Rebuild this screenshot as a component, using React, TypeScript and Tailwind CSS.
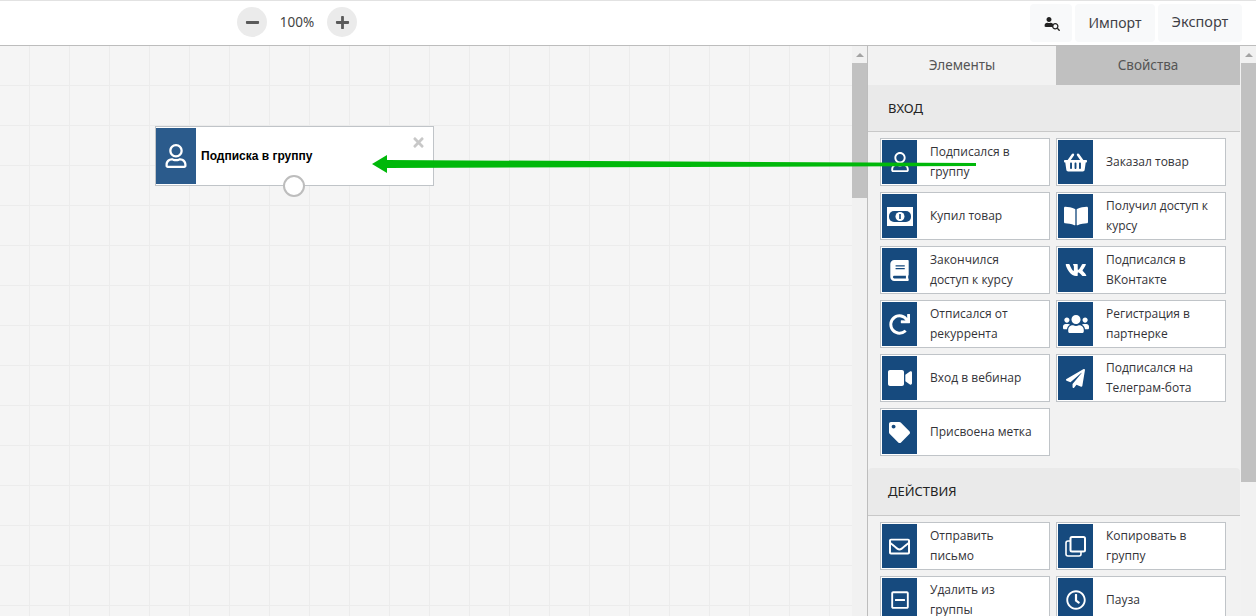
import type { ComponentType } from 'react';
import {
  FaBook,
  FaBookOpen,
  FaMinus,
  FaPaperPlane,
  FaPlus,
  FaRedo,
  FaRegClock,
  FaRegEnvelope,
  FaRegMinusSquare,
  FaRegUser,
  FaSearch,
  FaShoppingBasket,
  FaTag,
  FaTimes,
  FaUser,
  FaUsers,
  FaVideo,
  FaVk,
} from 'react-icons/fa';

type IconProps = { className?: string };
type Item = { label: string; icon: ComponentType<IconProps>; size: string };

function MoneyIcon({ className }: IconProps) {
  return (
    <svg className={className} viewBox="0 0 26 19">
      <rect width="26" height="19" y="0" fill="#fff" />
      <rect x="2" y="4" width="22" height="11" rx="5" fill="#164a7e" />
      <circle cx="13" cy="9.5" r="4.5" fill="#fff" />
      <rect x="12.2" y="7" width="1.6" height="5" fill="#164a7e" />
    </svg>
  );
}

function CopyIcon({ className }: IconProps) {
  return (
    <svg className={className} viewBox="0 0 21 21" fill="none" stroke="#fff">
      <rect x="5.5" y="1" width="14.5" height="14.5" rx="1.5" strokeWidth="2" />
      <path d="M5 5H3a2 2 0 0 0-2 2v11a2 2 0 0 0 2 2h11a2 2 0 0 0 2-2v-2" strokeWidth="1.6" />
    </svg>
  );
}

const ENTRY: Item[] = [
  { label: 'Подписался в группу', icon: FaRegUser, size: 'w-[20px] h-[20px]' },
  { label: 'Заказал товар', icon: FaShoppingBasket, size: 'w-[23px] h-[23px]' },
  { label: 'Купил товар', icon: MoneyIcon, size: 'w-[26px] h-[19px]' },
  { label: 'Получил доступ к курсу', icon: FaBookOpen, size: 'w-[24px] h-[24px]' },
  { label: 'Закончился доступ к курсу', icon: FaBook, size: 'w-[21px] h-[21px]' },
  { label: 'Подписался в ВКонтакте', icon: FaVk, size: 'w-[22px] h-[22px]' },
  { label: 'Отписался от рекуррента', icon: FaRedo, size: 'w-[21px] h-[21px]' },
  { label: 'Регистрация в партнерке', icon: FaUsers, size: 'w-[26px] h-[26px]' },
  { label: 'Вход в вебинар', icon: FaVideo, size: 'w-[24px] h-[24px]' },
  { label: 'Подписался на Телеграм-бота', icon: FaPaperPlane, size: 'w-[19px] h-[19px]' },
  { label: 'Присвоена метка', icon: FaTag, size: 'w-[21px] h-[21px]' },
];

const ACTIONS: Item[] = [
  { label: 'Отправить письмо', icon: FaRegEnvelope, size: 'w-[21px] h-[21px]' },
  { label: 'Копировать в группу', icon: CopyIcon, size: 'w-[21px] h-[21px]' },
  { label: 'Удалить из группы', icon: FaRegMinusSquare, size: 'w-[20px] h-[20px]' },
  { label: 'Пауза', icon: FaRegClock, size: 'w-[20px] h-[20px]' },
];

function Scrollbar({ thumb }: { thumb: string }) {
  return (
    <div className="w-[15px] shrink-0 bg-[#f1f1f1] flex flex-col items-center overflow-hidden">
      <div className="h-[17px] shrink-0 flex items-center justify-center">
        <div className="w-0 h-0 border-x-[4px] border-x-transparent border-b-[4px] border-b-[#a3a3a3]" />
      </div>
      <div className={`w-full bg-[#c1c1c1] shrink-0 ${thumb}`} />
    </div>
  );
}

function Card({ item }: { item: Item }) {
  const Icon = item.icon;
  return (
    <div className="h-12 border border-[#c0c4c8] bg-white p-px flex items-center">
      <div className="w-[35px] h-[44px] shrink-0 bg-[#164a7e] flex items-center justify-center text-white">
        <Icon className={item.size} />
      </div>
      <div className="pl-[13px] pr-[13px] text-[12px] leading-5 text-[#333338] font-['Open_Sans',sans-serif]">
        {item.label}
      </div>
    </div>
  );
}

function Section({ title, items, first }: { title: string; items: Item[]; first?: boolean }) {
  return (
    <div>
      <div
        className={
          first
            ? 'h-[47px] bg-[#eaeaea] border-b border-[#c8c8c8] pl-[20px] pt-[2px] flex items-center text-[13px] text-[#222]'
            : 'h-[48px] bg-[#eaeaea] border-b border-[#c8c8c8] rounded-t pl-[20px] flex items-center text-[13px] text-[#222]'
        }
      >
        {title}
      </div>
      <div className="grid grid-cols-[170px_170px] gap-x-[6px] gap-y-[6px] pl-[12px] pt-[6px] pb-3">
        {items.map((item) => (
          <Card key={item.label} item={item} />
        ))}
      </div>
    </div>
  );
}

export default function App() {
  return (
    <div className="w-[1256px] h-[616px] overflow-hidden bg-white flex flex-col relative font-['Noto_Sans',sans-serif]">
      {/* Top bar */}
      <div className="h-[46px] shrink-0 border-t border-b border-t-[#e2e2e2] border-b-[#bdbdbd] flex items-center pl-[237px] pr-[14px]">
        <button className="w-[30px] h-[30px] mb-[2px] rounded-full bg-[#ebebeb] flex items-center justify-center text-[#5a5a5a]">
          <FaMinus className="w-[15px] h-[15px]" />
        </button>
        <span className="w-[60px] mb-[2px] text-center text-[13.5px] text-[#444]">100%</span>
        <button className="w-[30px] h-[30px] mb-[2px] rounded-full bg-[#ebebeb] flex items-center justify-center text-[#5a5a5a]">
          <FaPlus className="w-[15px] h-[15px]" />
        </button>
        <div className="ml-auto flex items-center gap-[3px]">
          <button className="w-[42px] h-[38px] rounded bg-[#f8f9fa] flex items-center justify-center relative">
            <FaUser className="w-[10px] h-[10px] text-[#222] -translate-x-[2px] -translate-y-[1px]" />
            <FaSearch className="absolute left-[22px] top-[19px] w-[8px] h-[8px] text-[#222]" />
          </button>
          <button className="w-[80px] h-[38px] pb-[2px] rounded bg-[#f8f9fa] text-[14px] text-[#3f3f46]">Импорт</button>
          <button className="w-[84px] h-[38px] pb-[2px] rounded bg-[#f8f9fa] text-[14.5px] text-[#3f3f46]">Экспорт</button>
        </div>
      </div>

      <div className="flex-1 flex min-h-0">
        {/* Canvas */}
        <div className="w-[852px] shrink-0 relative overflow-hidden bg-[#f5f5f5] bg-[linear-gradient(#ececec_1px,transparent_1px),linear-gradient(90deg,#ececec_1px,transparent_1px)] bg-[size:40px_40px] bg-[position:29px_39px]">
          <div className="absolute left-[155px] top-[80px] w-[279px] h-[60px] border border-[#c0c4c8] bg-white flex items-center">
            <div className="w-[40px] h-[56px] bg-[#2b5b8c] flex items-center justify-center">
              <FaRegUser className="w-[24px] h-[24px] text-white" />
            </div>
            <span className="ml-[5px] text-[12px] font-bold text-black font-['Liberation_Sans',sans-serif]">
              Подписка в группу
            </span>
            <FaTimes className="absolute right-[7px] top-[8px] w-[15px] h-[15px] text-[#c8c8c8]" />
            <div className="absolute left-[127px] top-[48px] w-[22px] h-[22px] rounded-full border-2 border-[#bdbdbd] bg-white" />
          </div>
        </div>
        <Scrollbar thumb="h-[135px]" />

        {/* Right panel */}
        <div className="w-[374px] shrink-0 border-l border-[#bdbdbd] bg-[#f2f2f2] overflow-hidden">
          <div className="flex h-[39px] text-[13.5px] text-[#555]">
            <div className="w-[188px] flex items-center justify-center">Элементы</div>
            <div className="w-[184px] bg-[#c0c0c0] flex items-center justify-center">Свойства</div>
          </div>
          <div className="w-[372px]">
            <Section title="ВХОД" items={ENTRY} first />
            <Section title="ДЕЙСТВИЯ" items={ACTIONS} />
          </div>
        </div>
        <Scrollbar thumb="h-[419px]" />
      </div>

      {/* Arrow drawn over the screen */}
      <svg className="absolute left-0 top-0 pointer-events-none" width="1256" height="616">
        <polygon points="372,164 387,155 387,160 976,163 976,166 387,168 387,173" fill="#00b80a" />
      </svg>
    </div>
  );
}
